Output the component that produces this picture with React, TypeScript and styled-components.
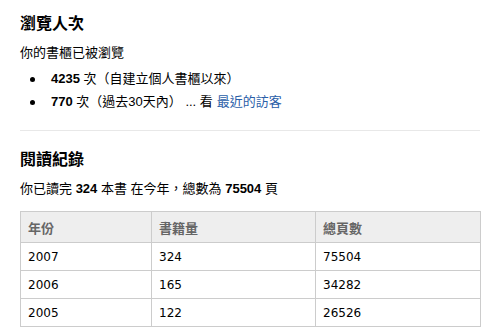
import React from "react";
import styled, { createGlobalStyle } from "styled-components";

const Global = createGlobalStyle`
  body {
    margin: 0;
    background: #fff;
    font-family: "Liberation Sans", "Noto Sans CJK TC", sans-serif;
    font-size: 13px;
    color: #000;
  }
`;

const Page = styled.div`
  width: 460px;
  padding: 14px 20px 0;
`;

const Title = styled.h2`
  margin: 0;
  font-size: 16px;
  line-height: 20px;
  font-weight: bold;
`;

const Text = styled.p<{ $mt?: number }>`
  margin: ${(p) => p.$mt ?? 10}px 0 0;
  line-height: 18px;
`;

const List = styled.ul`
  margin: 8px 0 0;
  padding: 0;
  list-style: none;
  display: flex;
  flex-direction: column;
  gap: 5px;
`;

const Item = styled.li`
  display: flex;
  align-items: center;
  line-height: 18px;
  padding-left: 10px;
`;

const Dot = styled.span`
  width: 5px;
  height: 5px;
  border-radius: 50%;
  background: #000;
  margin-right: 16px;
  flex-shrink: 0;
`;

const Divider = styled.hr`
  margin: 19px 0 19px;
  border: 0;
  border-top: 1px solid #e8e8e8;
`;

const Link = styled.a`
  color: #2a5ea8;
  text-decoration: none;
  margin-left: 4px;
`;

const Table = styled.table`
  margin-top: 13px;
  width: 461px;
  border-collapse: collapse;
  table-layout: fixed;
  border: 1px solid #cccccc;
  font-family: "DejaVu Sans", "Noto Sans CJK TC", sans-serif;
  font-size: 12px;
`;

const Th = styled.th`
  background: #eeeeee;
  color: #666;
  font-weight: bold;
  font-size: 13px;
  text-align: left;
  height: 30px;
  padding: 0 7px;
  border: 1px solid #cccccc;
`;

const Td = styled.td`
  height: 27px;
  padding: 0 7px;
  border: 1px solid #cccccc;
`;

const rows = [
  ["2007", "324", "75504"],
  ["2006", "165", "34282"],
  ["2005", "122", "26526"],
];

export default function App() {
  return (
    <>
      <Global />
      <Page>
        <Title>瀏覽人次</Title>
        <Text>你的書櫃已被瀏覽</Text>
        <List>
          <Item>
            <Dot />
            <span>
              <b>4235</b> 次（自建立個人書櫃以來）
            </span>
          </Item>
          <Item>
            <Dot />
            <span>
              <b>770</b> 次（過去30天內） ... 看<Link href="#">最近的訪客</Link>
            </span>
          </Item>
        </List>
        <Divider />
        <Title>閱讀紀錄</Title>
        <Text>
          你已讀完 <b>324</b> 本書 在今年，總數為 <b>75504</b> 頁
        </Text>
        <Table>
          <colgroup>
            <col style={{ width: 131 }} />
            <col style={{ width: 164 }} />
            <col style={{ width: 165 }} />
          </colgroup>
          <thead>
            <tr>
              <Th>年份</Th>
              <Th>書籍量</Th>
              <Th>總頁數</Th>
            </tr>
          </thead>
          <tbody>
            {rows.map((r) => (
              <tr key={r[0]}>
                {r.map((c, i) => (
                  <Td key={i}>{c}</Td>
                ))}
              </tr>
            ))}
          </tbody>
        </Table>
      </Page>
    </>
  );
}
